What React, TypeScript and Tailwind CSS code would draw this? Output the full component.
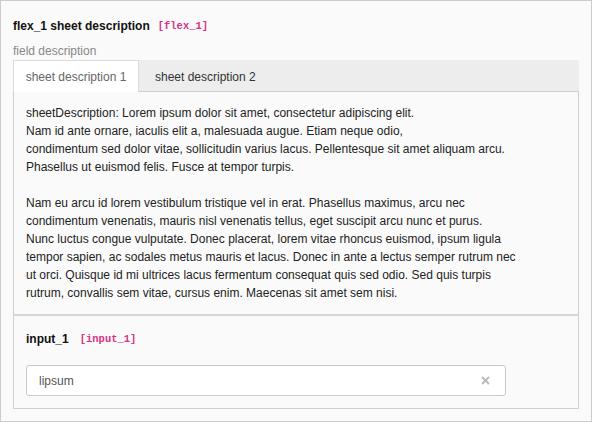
import { useState } from "react"

const para1 = [
  "sheetDescription: Lorem ipsum dolor sit amet, consectetur adipiscing elit.",
  "Nam id ante ornare, iaculis elit a, malesuada augue. Etiam neque odio,",
  "condimentum sed dolor vitae, sollicitudin varius lacus. Pellentesque sit amet aliquam arcu.",
  "Phasellus ut euismod felis. Fusce at tempor turpis.",
]

const para2 = [
  "Nam eu arcu id lorem vestibulum tristique vel in erat. Phasellus maximus, arcu nec",
  "condimentum venenatis, mauris nisl venenatis tellus, eget suscipit arcu nunc et purus.",
  "Nunc luctus congue vulputate. Donec placerat, lorem vitae rhoncus euismod, ipsum ligula",
  "tempor sapien, ac sodales metus mauris et lacus. Donec in ante a lectus semper rutrum nec",
  "ut orci. Quisque id mi ultrices lacus fermentum consequat quis sed odio. Sed quis turpis",
  "rutrum, convallis sem vitae, cursus enim. Maecenas sit amet sem nisi.",
]

const sans = { fontFamily: "'Liberation Sans', Arial, sans-serif" }
const mono = { fontFamily: "'Liberation Mono', 'Courier New', monospace" }

export default function App() {
  const [tab, setTab] = useState(0)
  const [value, setValue] = useState("lipsum")

  return (
    <div
      className="w-[592px] h-[422px] border border-[#cccccc] bg-[#fafafa] px-3 pt-[16px] text-[12px] leading-[18px] text-[#222]"
      style={sans}
    >
      {/* header */}
      <div className="flex items-center">
        <span className="font-bold text-[#111]">flex_1 sheet description</span>
        <span className="ml-2 text-[10.5px] font-bold text-[#d63384]" style={mono}>
          [flex_1]
        </span>
      </div>
      <div className="mt-[7px] text-[#888]">field description</div>

      {/* tabs */}
      <div className="flex h-[32px] rounded-t-[3px] border-b border-[#cfcfcf] bg-[#ededed]">
        <button
          onClick={() => setTab(0)}
          className={`-mb-px flex w-[126px] items-center justify-center border-l border-t border-r ${
            tab === 0 ? "border-[#dcdcdc] bg-white text-[#666]" : "border-transparent text-[#333]"
          }`}
        >
          sheet description 1
        </button>
        <button
          onClick={() => setTab(1)}
          className={`-mb-px flex items-center border-l border-t border-r pl-[15px] pr-3 ${
            tab === 1 ? "border-[#dcdcdc] bg-white text-[#666]" : "border-transparent text-[#333]"
          }`}
        >
          sheet description 2
        </button>
      </div>

      <div className="border-x border-b border-[#cfcfcf]">
        {/* sheet content */}
        <div className="border-b-2 border-[#d6d6d6] px-3 pt-[12px] pb-[12px]">
          <p>
            {para1.map((l) => (
              <span key={l} className="block">
                {l}
              </span>
            ))}
          </p>
          <p className="mt-[18px]">
            {para2.map((l) => (
              <span key={l} className="block">
                {l}
              </span>
            ))}
          </p>
        </div>

        {/* input section */}
        <div className="px-3 pt-[14px] pb-3">
          <div className="flex items-center">
            <span className="font-bold text-[#111]">input_1</span>
            <span className="ml-[11px] text-[10.5px] font-bold text-[#d63384]" style={mono}>
              [input_1]
            </span>
          </div>
          <div className="mt-[17px] flex h-[31px] w-[480px] items-center rounded-[3px] border border-[#c8c8c8] bg-white pl-3 pr-[15px]">
            <input
              value={value}
              onChange={(e) => setValue(e.target.value)}
              className="flex-1 bg-transparent text-[12px] text-[#555] outline-none"
              style={sans}
            />
            <button onClick={() => setValue("")} className="flex items-center justify-center">
              <svg width="9" height="9" viewBox="0 0 9 9">
                <path d="M1 1L8 8M8 1L1 8" stroke="#bbbbbb" strokeWidth="2" />
              </svg>
            </button>
          </div>
        </div>
      </div>
    </div>
  )
}
